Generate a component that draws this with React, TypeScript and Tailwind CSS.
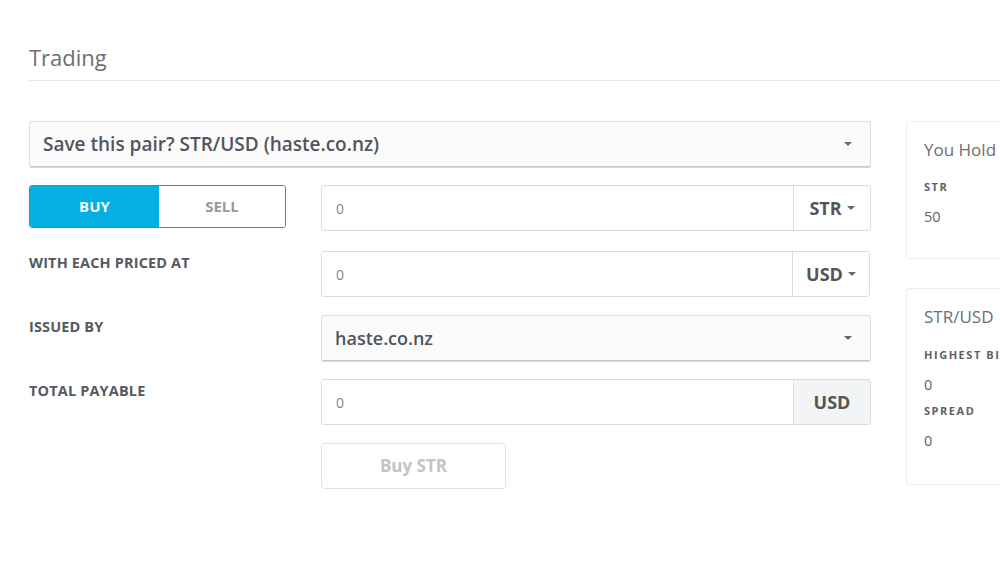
const font = { fontFamily: '"Open Sans", "Noto Sans", Arial, sans-serif' };

function Caret() {
  return <span className="inline-block w-0 h-0 border-x-[4px] border-x-transparent border-t-[4px] border-t-[#666]" />;
}

function AmountInput({ unit, dropdown, shaded }: { unit: string; dropdown?: boolean; shaded?: boolean }) {
  return (
    <div className="flex h-[46px] border border-[#dcdcdc] rounded-[3px] overflow-hidden">
      <div className="flex-1 flex items-center pl-[14px] text-[14px] text-[#888] bg-white">0</div>
      <div
        className={`w-[77px] flex items-center justify-center gap-[5px] border-l border-[#dcdcdc] text-[18px] font-bold text-[#555] ${
          shaded ? "bg-[#f3f4f5]" : "bg-white"
        }`}
      >
        {unit}
        {dropdown && <Caret />}
      </div>
    </div>
  );
}

function SelectBox({ label, size }: { label: string; size: string }) {
  return (
    <div className="flex items-center justify-between h-[46px] px-[13px] pr-[18px] bg-[#fbfbfb] border border-[#dedede] border-b-[#c9c9c9] rounded-[3px] shadow-[0_1px_0_#d6d6d6]">
      <span className={`${size} font-semibold text-[#505560]`}>{label}</span>
      <Caret />
    </div>
  );
}

function Label({ children }: { children: string }) {
  return <div className="pt-[1px] text-[14.5px] font-bold text-[#555a60] tracking-[0.01em]">{children}</div>;
}

function StatLabel({ children, className = "" }: { children: string; className?: string }) {
  return (
    <div className={`text-[11px] font-bold tracking-[0.14em] text-[#5d6166] whitespace-nowrap ${className}`}>
      {children}
    </div>
  );
}

export default function App() {
  return (
    <div className="w-[1000px] h-[563px] overflow-hidden bg-white pl-[29px]" style={font}>
      <div className="pt-[42px] pb-[8px] border-b border-[#e6e6e6]">
        <h1 className="text-[22px] leading-[30px] text-[#6b6f73]">Trading</h1>
      </div>

      <div className="flex gap-[35px] mt-[40px]">
        <div className="w-[842px] shrink-0">
          <SelectBox label="Save this pair? STR/USD (haste.co.nz)" size="text-[19px]" />

          <div className="grid grid-cols-[257px_550px] gap-x-[35px] mt-[18px]">
            <div className="flex h-[43px] rounded-[3px] border border-[#2f93b8] overflow-hidden text-[15px] font-bold">
              <div className="w-[129px] flex items-center justify-center bg-[#03afe3] text-[#f2fbff]">BUY</div>
              <div className="flex-1 flex items-center justify-center bg-white text-[#999]">SELL</div>
            </div>
            <AmountInput unit="STR" dropdown />

            <div className="mt-[20px]">
              <Label>WITH EACH PRICED AT</Label>
            </div>
            <div className="mt-[20px] mr-[1px]">
              <AmountInput unit="USD" dropdown />
            </div>

            <div className="mt-[18px]">
              <Label>ISSUED BY</Label>
            </div>
            <div className="mt-[18px]">
              <SelectBox label="haste.co.nz" size="text-[18px]" />
            </div>

            <div className="mt-[18px]">
              <Label>TOTAL PAYABLE</Label>
            </div>
            <div className="mt-[18px]">
              <AmountInput unit="USD" shaded />
            </div>

            <div />
            <div className="mt-[18px]">
              <button
                disabled
                className="w-[185px] h-[46px] border border-[#e3e3e3] rounded-[3px] bg-white text-[17px] font-bold text-[#c2c4c6]"
              >
                Buy STR
              </button>
            </div>
          </div>
        </div>

        <div className="w-[200px] shrink-0 flex flex-col gap-[29px]">
          <div className="h-[138px] border border-[#ececec] rounded-[3px] pl-[17px] pt-[16px]">
            <div className="text-[17px] text-[#6b6f73] leading-[24px]">You Hold</div>
            <StatLabel className="mt-[17px]">STR</StatLabel>
            <div className="mt-[10px] text-[14.5px] text-[#5d6166]">50</div>
          </div>
          <div className="h-[197px] border border-[#ececec] rounded-[3px] pl-[17px] pt-[16px]">
            <div className="text-[17px] text-[#6b6f73] leading-[24px]">STR/USD</div>
            <StatLabel className="mt-[18px]">HIGHEST BID</StatLabel>
            <div className="mt-[10px] text-[14.5px] text-[#5d6166]">0</div>
            <StatLabel className="mt-[8px]">SPREAD</StatLabel>
            <div className="mt-[10px] text-[14.5px] text-[#5d6166]">0</div>
          </div>
        </div>
      </div>
    </div>
  );
}
